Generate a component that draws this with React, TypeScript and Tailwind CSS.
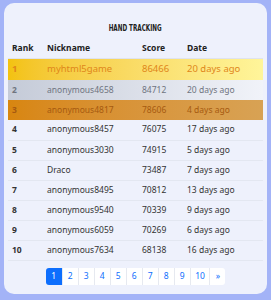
const rows = [
  { rank: 1, name: "myhtml5game", score: 86466, date: "20 days ago" },
  { rank: 2, name: "anonymous4658", score: 84712, date: "20 days ago" },
  { rank: 3, name: "anonymous4817", score: 78606, date: "4 days ago" },
  { rank: 4, name: "anonymous8457", score: 76075, date: "17 days ago" },
  { rank: 5, name: "anonymous3030", score: 74915, date: "5 days ago" },
  { rank: 6, name: "Draco", score: 73487, date: "7 days ago" },
  { rank: 7, name: "anonymous8495", score: 70812, date: "13 days ago" },
  { rank: 8, name: "anonymous9540", score: 70339, date: "9 days ago" },
  { rank: 9, name: "anonymous6059", score: 70269, date: "6 days ago" },
  { rank: 10, name: "anonymous7634", score: 68138, date: "16 days ago" },
];

const rowStyle: Record<number, string> = {
  1: "h-[22px] bg-gradient-to-r from-[#f3c20e] to-[#fff59a] text-[#e0861a] text-[9.5px]",
  2: "h-[20px] bg-gradient-to-r from-[#c5cbd8] to-[#f1f3f9] text-[#6f7480]",
  3: "h-[20px] bg-gradient-to-r from-[#d8860f] to-[#d8a254] text-[#a65a10]",
};

const pages = ["1", "2", "3", "4", "5", "6", "7", "8", "9", "10", "»"];

export default function App() {
  return (
    <div className="w-[271px] h-[300px] bg-[#a3b3f7] pt-[3px] px-[4px] font-['Noto_Sans',sans-serif]">
      <div className="h-[291px] rounded-[10px] bg-[#eef1fc] px-[4px] pt-[18px]">
        <div className="flex justify-center">
          <h1 className="scale-x-[0.66] text-[9.5px] leading-[13px] font-bold uppercase text-[#222] font-['DejaVu_Sans_Condensed',sans-serif]">
            Hand Tracking
          </h1>
        </div>
        <table className="mt-[5px] w-full border-collapse text-[8.5px] text-[#333]">
          <thead>
            <tr className="h-[19px] border-b border-[#dfe3ee] text-[#222]">
              <th className="w-[39px] pl-[4px] text-left font-bold">Rank</th>
              <th className="w-[95px] text-left font-bold">Nickname</th>
              <th className="w-[45px] text-left font-bold">Score</th>
              <th className="text-left font-bold">Date</th>
            </tr>
          </thead>
          <tbody>
            {rows.map((r) => (
              <tr
                key={r.rank}
                className={rowStyle[r.rank] ?? "h-[20px] border-b border-[#e3e7f1]"}
              >
                <td className="pl-[4px] font-bold">{r.rank}</td>
                <td>{r.name}</td>
                <td>{r.score}</td>
                <td>{r.date}</td>
              </tr>
            ))}
          </tbody>
        </table>
        <div className="mt-[7px] flex justify-center">
          {pages.map((p) => (
            <span
              key={p}
              className={
                p === "1"
                  ? "h-[17px] min-w-[16px] px-[5px] flex items-center justify-center rounded-l-[3px] bg-[#0d6efd] text-white text-[8.5px]"
                  : "h-[17px] min-w-[16px] px-[4.5px] flex items-center justify-center bg-white text-[#0d6efd] text-[8.5px] border-l border-[#e6e9f0] last:rounded-r-[3px]"
              }
            >
              {p}
            </span>
          ))}
        </div>
      </div>
    </div>
  );
}
